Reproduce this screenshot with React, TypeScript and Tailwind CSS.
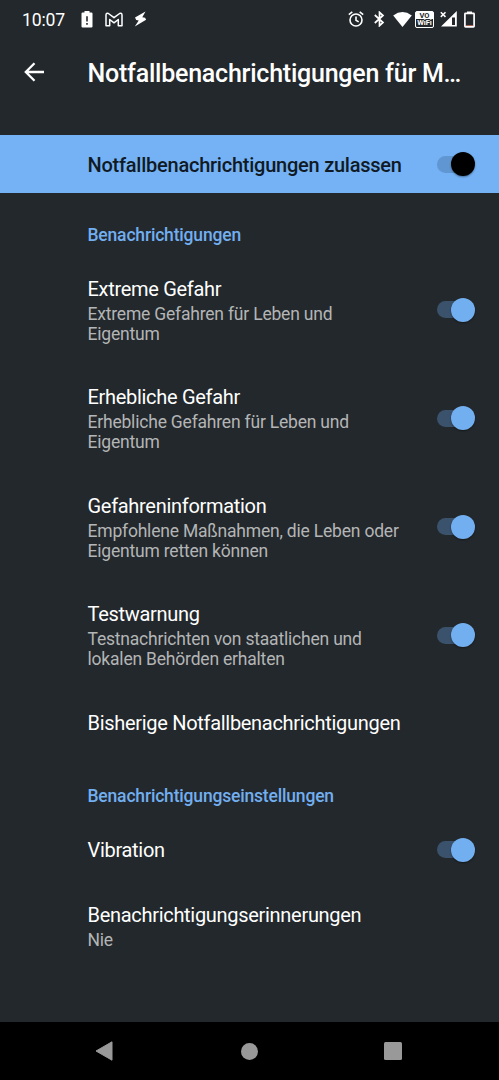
import clsx from "clsx"

interface SwitchProps {
  inverted?: boolean
}

interface PreferenceProps {
  title: string
  summary?: string
  checked?: boolean
  className?: string
}

const alerts = [
  { title: "Extreme Gefahr", summary: "Extreme Gefahren für Leben und Eigentum" },
  { title: "Erhebliche Gefahr", summary: "Erhebliche Gefahren für Leben und Eigentum" },
  { title: "Gefahreninformation", summary: "Empfohlene Maßnahmen, die Leben oder Eigentum retten können" },
  { title: "Testwarnung", summary: "Testnachrichten von staatlichen und lokalen Behörden erhalten" },
]

function Switch({ inverted }: SwitchProps) {
  return (
    <span
      className={clsx(
        "flex h-[17px] w-[34px] shrink-0 items-center justify-end rounded-full",
        inverted ? "bg-[#6097d2]" : "mb-px bg-[#3b526d]"
      )}
    >
      <span
        className={clsx(
          "-mr-1 size-6 shrink-0 rounded-full shadow-[0_1px_2px_rgba(0,0,0,0.4)]",
          inverted ? "bg-black" : "bg-[#72aff0]"
        )}
      />
    </span>
  )
}

function StatusBar() {
  return (
    <div className="flex h-[38px] shrink-0 items-center pl-[22px]">
      <span className="w-[59px] pt-0.5 text-[17.6px] leading-5 tracking-[-0.15px] whitespace-nowrap">10:07</span>
      {/* Battery alert */}
      <svg className="h-[17px] w-3" viewBox="0 0 12 17" fill="white">
        <path fillRule="evenodd" d="M3.500 0h5v1.500h1.900q1.100 0 1.100 1.100v12.800q0 1.100-1.100 1.100H1.600Q.5 16.500.5 15.400V2.600Q.5 1.500 1.600 1.500h1.900zM5.200 5.200v5.300h1.600V5.200zM5.200 12v1.800h1.600V12z" />
      </svg>
      {/* Gmail */}
      <svg className="ml-[12px] h-[15px] w-[18px]" viewBox="0 0 18 15" fill="none" stroke="white" strokeWidth="1.5" strokeLinejoin="round">
        <path d="M1 3Q1.200.6 3.400 1.500L9 5.700l5.600-4.200q2.200-.9 2.400 1.500v10.700h-3.700V7.500L9 10.800 4.700 7.500v6.200H1z" />
      </svg>
      {/* Flash */}
      <svg className="ml-[11px] h-4 w-[13px]" viewBox="0 0 13 16" fill="white">
        <path d="M11.500.5 1 6.500l1.200 2.600 2.500.3L.8 15.500l11.300-6.800-1-2-2.800-.5z" />
      </svg>
      <div className="ml-[201px] flex items-center">
        {/* Alarm */}
        <svg className="size-4" viewBox="0 0 16 16" fill="none" stroke="white" strokeWidth="1.6">
          <circle cx="8" cy="9" r="6" />
          <path d="M8 5.500V9.300l2.700 1.600M.8 3.600 4.300.8M15.200 3.600 11.700.8" />
        </svg>
        {/* Bluetooth */}
        <svg className="ml-[10px] h-4 w-[11px]" viewBox="0 0 11 16" fill="none" stroke="white" strokeWidth="1.7">
          <path d="m.8 4 8.200 7.500-3.500 3.200V1.300L9 4.500.8 12" />
        </svg>
        {/* Wifi */}
        <svg className="ml-2 h-[15px] w-[19px]" viewBox="0 0 19 15" fill="white">
          <path d="M9.500 15 .2 3.500Q9.500-3.300 18.800 3.500z" />
        </svg>
        <div className="ml-[3px] flex h-[17px] w-[19px] flex-col overflow-hidden rounded-[2px] border border-white bg-white text-center font-bold">
          <span className="h-[7px] text-[7.500px] leading-[7px] text-[#23282c]">VO</span>
          <span className="h-2 bg-[#23282c] text-[7.500px] leading-[8px]">WiFi</span>
        </div>
        {/* Mobile signal */}
        <svg className="ml-[6px] h-4 w-[17px]" viewBox="0 0 17 16" fill="white">
          <path fillRule="evenodd" d="M16.800 0V15.500H1zM12 6.500v7.500h3V6.500z" />
          <path d="m.8 1.200 4.700 4.700m0-4.700L.8 5.900" stroke="white" strokeWidth="1.500" />
        </svg>
        {/* Battery */}
        <svg className="ml-[7px] h-[17px] w-[11px]" viewBox="0 0 11 17">
          <path d="M3 .5h5v2H3z" fill="white" />
          <rect x=".9" y="2.400" width="9.200" height="13.400" rx=".6" fill="none" stroke="white" strokeWidth="1.700" />
          <path d="M2 14.500h7" stroke="#c9705f" strokeWidth=".8" />
        </svg>
      </div>
    </div>
  )
}

function Category({ title, className }: { title: string; className: string }) {
  return (
    <h2 className={clsx("flex shrink-0 items-center pl-[87.500px] text-[17.500px] font-medium leading-5 tracking-[-0.18px] text-[#72aff0]", className)}>
      {title}
    </h2>
  )
}

function Preference({ title, summary, checked, className }: PreferenceProps) {
  return (
    <div className={clsx("flex shrink-0 items-center pr-7 pl-[87.500px]", className)}>
      <div className="min-w-0 flex-1">
        <div className="text-[20px] leading-[25px] tracking-[-0.3px] whitespace-nowrap">{title}</div>
        {summary && <div className="w-[320px] pt-0.5 text-[17.500px] leading-5 tracking-[-0.2px] text-[#b3b5b6]">{summary}</div>}
      </div>
      {checked && <Switch />}
    </div>
  )
}

function NavigationBar() {
  return (
    <div className="flex h-[58px] shrink-0 items-center bg-black pl-[95px]">
      <svg className="h-5 w-[18px]" viewBox="0 0 18 20">
        <path d="M1 10 17 .8v18.400z" fill="#999" stroke="#999" strokeLinejoin="round" />
      </svg>
      <span className="ml-32 size-[17px] rounded-full bg-[#999]" />
      <span className="ml-[126px] size-[18px] rounded-[1.500px] bg-[#999]" />
    </div>
  )
}

export default function App() {
  return (
    <div className="flex h-[1080px] w-[499px] flex-col overflow-hidden bg-[#23282c] font-['Roboto',sans-serif] text-white">
      <StatusBar />
      <header className="flex h-[97px] shrink-0 items-start pt-5 pl-6">
        <svg className="mt-1 h-5 w-5" viewBox="0 0 20 20" fill="none" stroke="white" strokeWidth="2.300">
          <path d="M20 10H2M10.500 1.300 1.800 10l8.700 8.700" />
        </svg>
        <h1 className="ml-[43.500px] w-[385px] text-[25px] leading-8 font-medium tracking-[-0.23px] whitespace-nowrap">
          Notfallbenachrichtigungen für M…
        </h1>
      </header>

      <div className="flex h-[58px] shrink-0 items-center bg-[#74b2f5] pr-7 pl-[87.500px]">
        <span className="flex-1 pt-0.5 text-[20px] font-medium tracking-[-0.24px] whitespace-nowrap text-[#101a24]">
          Notfallbenachrichtigungen zulassen
        </span>
        <Switch inverted />
      </div>

      <main className="flex flex-1 flex-col">
        <Category title="Benachrichtigungen" className="h-[63px] pt-[21px]" />
        {alerts.map(alert => (
          <Preference key={alert.title} {...alert} checked className="h-[108.500px]" />
        ))}
        <Preference title="Bisherige Notfallbenachrichtigungen" className="h-[66px]" />
        <Category title="Benachrichtigungseinstellungen" className="h-[61px] pt-[19px]" />
        <Preference title="Vibration" checked className="h-[66px]" />
        <Preference title="Benachrichtigungserinnerungen" summary="Nie" className="h-[87px]" />
      </main>

      <NavigationBar />
    </div>
  )
}
